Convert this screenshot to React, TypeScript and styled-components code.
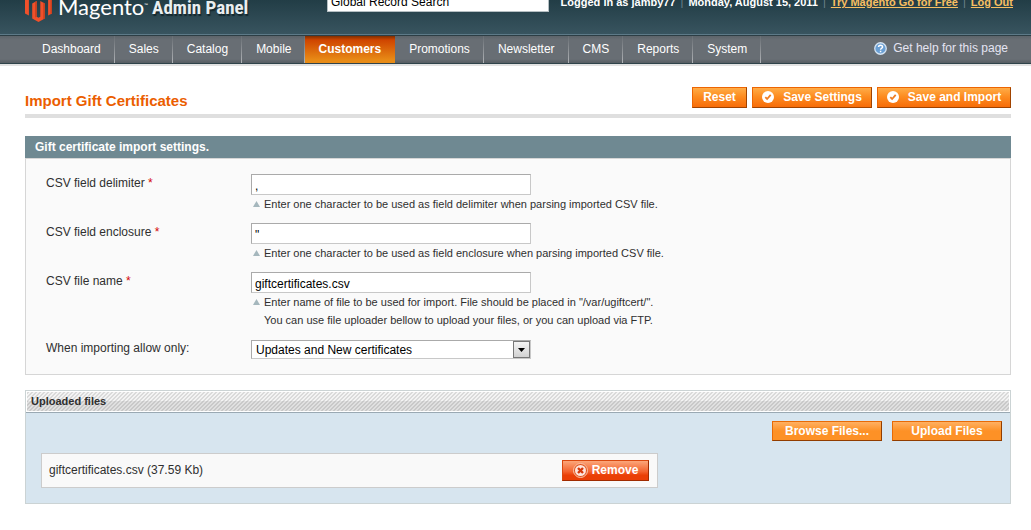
import React from "react";
import styled, { createGlobalStyle } from "styled-components";

const Global = createGlobalStyle`
  * { box-sizing: border-box; }
  body {
    margin: 0;
    background: #fff;
    color: #2f2f2f;
    font: 12px/18px "Liberation Sans", Arial, sans-serif;
  }
  button, input, select { font: inherit; }
`;

const Header = styled.header`
  display: flex;
  align-items: flex-end;
  height: 34px;
  padding: 0 18px 0 25px;
  overflow: hidden;
  background: linear-gradient(#223d46, #38545f);
`;

const Brand = styled.div`
  display: flex;
  align-items: flex-end;
  width: 302px;
  flex: none;
  padding-bottom: 12px;
  color: #fff;
  white-space: nowrap;
`;

const BrandName = styled.span`
  margin-left: 6px;
  font: 22px/30px Lato, sans-serif;
`;

const Trademark = styled.sup`
  font-size: 5px;
  line-height: 5px;
  vertical-align: 8px;
`;

const BrandPanel = styled.span`
  margin-left: 4px;
  font: bold 19px/28px "Roboto Condensed", "Open Sans Condensed", Roboto, sans-serif;
  color: #e9eef0;
  text-shadow: 1px 2px 1px #14272d;
`;

const Search = styled.input`
  width: 222px;
  height: 21px;
  margin-bottom: 22px;
  padding: 2px 3px;
  border: 1px solid #b5bfc3;
  background: #fff;
  color: #000;
`;

const Account = styled.div`
  display: flex;
  gap: 5px;
  margin-left: auto;
  padding-bottom: 23px;
  color: #fff;
  font-size: 11px;
  font-weight: bold;
  line-height: 18px;
  white-space: nowrap;
`;

const Divider = styled.span`
  color: #6f858d;
  font-weight: normal;
`;

const AccountLink = styled.a`
  color: #f7bf62;
`;

const NavBar = styled.nav`
  display: flex;
  height: 30px;
  padding: 0 23px 0 28px;
  border-top: 1px solid #5d7a88;
  border-bottom: 1px solid #2f434a;
  background: linear-gradient(#2c3e45 0 1px, #5d646a 1px, #686e74 5px 24px, #565d63);
  box-shadow: 0 2px 0 #e2e2e2;
`;

const NavList = styled.ul`
  display: flex;
  margin: 0;
  padding: 1px 0 0;
  list-style: none;
`;

const NavItem = styled.li<{ $active?: boolean }>`
  padding: ${(p) => (p.$active ? "0 14px 0 13px" : "0 13px 0 14px")};
  border-right: ${(p) => (p.$active ? "0" : "1px solid")};
  border-image: linear-gradient(#656b71, #b3b6b9) 1;
  background: ${(p) =>
    p.$active ? "linear-gradient(#812f00, #cf4500 4px, #e88b16 24px)" : "none"};
  font-weight: ${(p) => (p.$active ? "bold" : "normal")};
`;

const NavLink = styled.a`
  color: #fff;
  line-height: 27px;
  text-decoration: none;
`;

const HelpLink = styled.a`
  display: flex;
  align-items: center;
  gap: 6px;
  height: 26px;
  margin-left: auto;
  color: #e4e4f2;
  text-decoration: none;
  white-space: nowrap;
`;

const Main = styled.main`
  padding: 23px 20px 26px 25px;
`;

const TitleBar = styled.div`
  display: flex;
  justify-content: space-between;
  align-items: flex-start;
  height: 31px;
  border-bottom: 4px solid #dfdfdf;
`;

const Title = styled.h1`
  margin: 0;
  padding-top: 4px;
  color: #eb5e00;
  font-size: 15px;
  line-height: 20px;
`;

const ButtonRow = styled.div<{ $gap: number }>`
  display: flex;
  justify-content: flex-end;
  gap: ${(p) => p.$gap}px;
`;

const tones = {
  orange: {
    fill: "linear-gradient(#ffac47, #fd8c20 45%, #f76c08)",
    edge: "#ed6502 #a04300 #a04300 #ed6502",
  },
  flat: {
    fill: "linear-gradient(#ffb062, #fd9126 50%)",
    edge: "#e76a06 #913d00 #913d00 #e76a06",
  },
  red: {
    fill: "linear-gradient(#fba67a, #f4642f 55%, #ea3f06 75%)",
    edge: "#d9480f #a02b00 #a02b00 #d9480f",
  },
};

const Button = styled.button<{
  $tone: keyof typeof tones;
  $width: number;
  $height?: number;
  $gap?: number;
}>`
  display: flex;
  align-items: center;
  justify-content: center;
  gap: ${(p) => p.$gap ?? 0}px;
  flex: none;
  width: ${(p) => p.$width}px;
  height: ${(p) => p.$height ?? 21}px;
  padding: 0 0 1px;
  border: 1px solid;
  border-color: ${(p) => tones[p.$tone].edge};
  background: ${(p) => tones[p.$tone].fill};
  color: #fff;
  font-weight: bold;
  line-height: 16px;
  white-space: nowrap;
  cursor: pointer;
`;

const PanelTitle = styled.h2`
  margin: 18px 0 0;
  padding: 2px 10px;
  background: #6f8992;
  color: #fff;
  font-size: 12px;
  line-height: 18px;
`;

const Form = styled.form`
  display: grid;
  gap: 10px;
  padding: 15px 20px;
  border: 1px solid #d6d6d6;
  background: #fafafa;
`;

const Field = styled.div`
  display: grid;
  grid-template-columns: 205px minmax(0, 1fr);
`;

const Label = styled.label`
  line-height: 18px;
`;

const Required = styled.span`
  color: #d40707;
`;

const TextInput = styled.input`
  display: block;
  width: 280px;
  height: 21px;
  padding: 2px 3px 0;
  border: 1px solid;
  border-color: #aaa #c8c8c8 #c8c8c8 #aaa;
  background: #fff;
  color: #000;
`;

const Hint = styled.p`
  display: flex;
  gap: 4px;
  margin: 0;
  padding-left: 2px;
  font-size: 11px;
  line-height: 18px;
`;

const Pointer = styled.svg`
  flex: none;
  margin-top: 6px;
`;

const SelectBox = styled.div`
  display: grid;
  width: 280px;
  margin-top: 1px;
  border: 1px solid;
  border-color: #aaa #c8c8c8 #c8c8c8 #aaa;
  background: #fff;
`;

const Select = styled.select`
  grid-area: 1 / 1;
  width: 100%;
  height: 17px;
  padding: 0 20px 0 4px;
  border: 0;
  appearance: none;
  background: none;
  color: #000;
  line-height: 16px;
`;

const Arrow = styled.span`
  display: grid;
  grid-area: 1 / 1;
  place-items: center;
  justify-self: end;
  width: 17px;
  height: 17px;
  border: 1px solid #777;
  background: linear-gradient(#f4f4f4, #d2d2d2);
  pointer-events: none;
`;

const Uploads = styled.section`
  margin-top: 15px;
  border: 1px solid #cbd3d4;
  background: #d7e5ef;
`;

const UploadsTitle = styled.h2`
  margin: 0;
  padding: 1px 4px;
  border: 1px solid #fff;
  box-shadow: 0 1px 0 #9aa9b3;
  background:
    linear-gradient(135deg, rgba(0, 0, 0, 0.1) 25%, transparent 25% 50%, rgba(0, 0, 0, 0.1) 50% 75%, transparent 75%) 0 0 / 4px 4px,
    linear-gradient(#f3f3f3 50%, #e0e0e0 50%);
  font-size: 11px;
  line-height: 17px;
`;

const UploadsBody = styled.div`
  padding: 9px 8px 15px 15px;
`;

const FileRow = styled.div`
  display: flex;
  align-items: center;
  justify-content: space-between;
  width: 617px;
  max-width: 100%;
  height: 35px;
  margin-top: 12px;
  padding: 0 8px 0 7px;
  border: 1px solid #ccc;
  background: #f9f9f9;
`;

const FileName = styled.span`
  padding-bottom: 2px;
`;

const MagentoMark = () => (
  <svg width="27" height="32" viewBox="0 0 27 32" aria-hidden="true">
    <path
      fill="#f1502a"
      d="M13.500 0 27 7.800V23.400L23.100 25.600V10.100L13.500 4.500 3.900 10.100V25.600L0 23.400V7.800ZM7.200 13.400 11.700 10.900V26.800L13.500 27.800 15.300 26.800V10.900L19.800 13.400V28.500L13.500 32 7.200 28.500Z"
    />
    <path
      fill="#c9401f"
      d="M25.500 7V24.300L27 23.400V7.800ZM18.300 12.600V29.300L19.800 28.500V13.400ZM10.200 11.700V27.500L11.700 26.800V10.900Z"
    />
  </svg>
);

const CheckIcon = () => (
  <svg width="12" height="12" viewBox="0 0 12 12" aria-hidden="true">
    <circle cx="6" cy="6" r="6" fill="#fff" />
    <path d="M3.300 6.200 5.100 8 8.700 3.900" fill="none" stroke="#f07d22" strokeWidth="1.800" />
  </svg>
);

const RemoveIcon = () => (
  <svg width="15" height="15" viewBox="0 0 15 15" aria-hidden="true">
    <circle cx="7.500" cy="7.500" r="7" fill="#e2541d" stroke="#fac3a8" />
    <circle cx="7.500" cy="7.500" r="5.500" fill="#fde6de" />
    <path d="m5 5 5 5m0-5-5 5" stroke="#d5380a" strokeWidth="2.400" />
  </svg>
);

const HelpIcon = () => (
  <svg width="13" height="13" viewBox="0 0 14 14" aria-hidden="true">
    <circle cx="7" cy="7" r="6.200" fill="#6a9fd4" stroke="#d5e4f3" strokeWidth="1.400" />
    <path
      d="M4.900 5.500C4.900 2.900 9.200 3 9.200 5.300 9.200 6.800 7.100 6.700 7.100 8.400M7.100 9.400V11"
      fill="none"
      stroke="#fff"
      strokeWidth="1.600"
    />
  </svg>
);

const HintPointer = () => (
  <Pointer width="7" height="6" viewBox="0 0 7 6" aria-hidden="true">
    <path d="M3.500 0 7 6H0Z" fill="#a5b7bd" />
  </Pointer>
);

const navItems = [
  "Dashboard",
  "Sales",
  "Catalog",
  "Mobile",
  "Customers",
  "Promotions",
  "Newsletter",
  "CMS",
  "Reports",
  "System",
];

const fields: { id: string; label: string; value: string; hint: React.ReactNode }[] = [
  {
    id: "delimiter",
    label: "CSV field delimiter",
    value: ",",
    hint: "Enter one character to be used as field delimiter when parsing imported CSV file.",
  },
  {
    id: "enclosure",
    label: "CSV field enclosure",
    value: '"',
    hint: "Enter one character to be used as field enclosure when parsing imported CSV file.",
  },
  {
    id: "filename",
    label: "CSV file name",
    value: "giftcertificates.csv",
    hint: (
      <>
        Enter name of file to be used for import. File should be placed in "/var/ugiftcert/".
        <br />
        You can use file uploader bellow to upload your files, or you can upload via FTP.
      </>
    ),
  },
];

export default function App() {
  return (
    <>
      <Global />
      <Header>
        <Brand>
          <MagentoMark />
          <BrandName>
            Magento<Trademark>™</Trademark>
          </BrandName>
          <BrandPanel>Admin Panel</BrandPanel>
        </Brand>
        <Search aria-label="Global record search" defaultValue="Global Record Search" />
        <Account>
          <span>Logged in as jamby77</span>
          <Divider>|</Divider>
          <span>Monday, August 15, 2011</span>
          <Divider>|</Divider>
          <AccountLink href="#">Try Magento Go for Free</AccountLink>
          <Divider>|</Divider>
          <AccountLink href="#">Log Out</AccountLink>
        </Account>
      </Header>
      <NavBar>
        <NavList>
          {navItems.map((item) => (
            <NavItem key={item} $active={item === "Customers"}>
              <NavLink href="#">{item}</NavLink>
            </NavItem>
          ))}
        </NavList>
        <HelpLink href="#">
          <HelpIcon />
          Get help for this page
        </HelpLink>
      </NavBar>
      <Main>
        <TitleBar>
          <Title>Import Gift Certificates</Title>
          <ButtonRow $gap={5}>
            <Button type="button" $tone="orange" $width={55}>
              Reset
            </Button>
            <Button type="button" $tone="orange" $width={120} $gap={9}>
              <CheckIcon />
              Save Settings
            </Button>
            <Button type="button" $tone="orange" $width={134} $gap={9}>
              <CheckIcon />
              Save and Import
            </Button>
          </ButtonRow>
        </TitleBar>
        <PanelTitle>Gift certificate import settings.</PanelTitle>
        <Form>
          {fields.map((field) => (
            <Field key={field.id}>
              <Label htmlFor={field.id}>
                {field.label} <Required>*</Required>
              </Label>
              <div>
                <TextInput id={field.id} defaultValue={field.value} />
                <Hint>
                  <HintPointer />
                  <span>{field.hint}</span>
                </Hint>
              </div>
            </Field>
          ))}
          <Field>
            <Label htmlFor="allow">When importing allow only:</Label>
            <SelectBox>
              <Select id="allow">
                <option>Updates and New certificates</option>
              </Select>
              <Arrow>
                <svg width="7" height="4" viewBox="0 0 7 4" aria-hidden="true">
                  <path d="M0 0H7L3.500 4Z" fill="#000" />
                </svg>
              </Arrow>
            </SelectBox>
          </Field>
        </Form>
        <Uploads>
          <UploadsTitle>Uploaded files</UploadsTitle>
          <UploadsBody>
            <ButtonRow $gap={10}>
              <Button type="button" $tone="flat" $width={110} $height={20}>
                Browse Files...
              </Button>
              <Button type="button" $tone="flat" $width={110} $height={20}>
                Upload Files
              </Button>
            </ButtonRow>
            <FileRow>
              <FileName>giftcertificates.csv (37.59 Kb)</FileName>
              <Button type="button" $tone="red" $width={87} $gap={4}>
                <RemoveIcon />
                Remove
              </Button>
            </FileRow>
          </UploadsBody>
        </Uploads>
      </Main>
    </>
  );
}
